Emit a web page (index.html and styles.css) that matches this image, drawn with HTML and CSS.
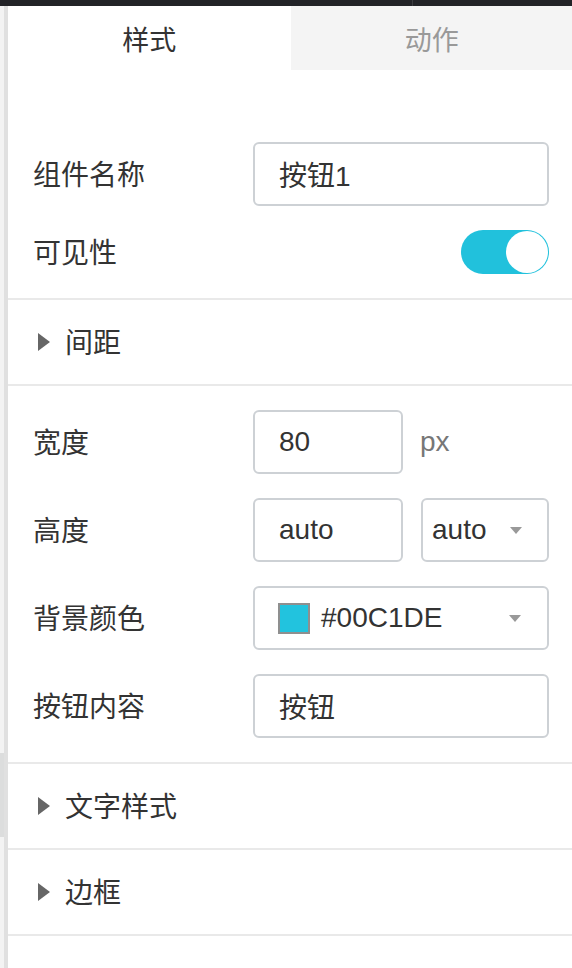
FILE: index.html
```html
<!DOCTYPE html>
<html lang="zh-CN">
<head>
<meta charset="utf-8">
<title>样式面板</title>
<link rel="stylesheet" href="styles.css">
</head>
<body>
<div class="app">
  <div class="topbar"><span class="topbar-sep"></span></div>
  <div class="main">
    <div class="gutter"><span class="gutter-thumb"></span></div>
    <div class="panel">
      <div class="tabs">
        <div class="tab active">样式</div>
        <div class="tab">动作</div>
      </div>

      <section class="group first">
        <div class="row">
          <div class="label">组件名称</div>
          <div class="field input wide">按钮1</div>
        </div>
        <div class="row short">
          <div class="label">可见性</div>
          <div class="toggle-wrap"><div class="toggle"><span class="knob"></span></div></div>
        </div>
      </section>

      <section class="collapse">
        <span class="caret"></span><span class="collapse-title">间距</span>
      </section>

      <section class="group">
        <div class="row">
          <div class="label">宽度</div>
          <div class="controls">
            <div class="field input narrow">80</div>
            <span class="unit">px</span>
          </div>
        </div>
        <div class="row">
          <div class="label">高度</div>
          <div class="controls">
            <div class="field input narrow">auto</div>
            <div class="field select small">auto<span class="arrow"></span></div>
          </div>
        </div>
        <div class="row">
          <div class="label">背景颜色</div>
          <div class="field select color wide"><span class="swatch"></span><span class="color-text">#00C1DE</span><span class="arrow"></span></div>
        </div>
        <div class="row">
          <div class="label">按钮内容</div>
          <div class="field input wide">按钮</div>
        </div>
      </section>

      <section class="collapse">
        <span class="caret"></span><span class="collapse-title">文字样式</span>
      </section>
      <section class="collapse">
        <span class="caret"></span><span class="collapse-title">边框</span>
      </section>
    </div>
  </div>
</div>
</body>
</html>
```

FILE: styles.css
```css
* { box-sizing: border-box; }

html, body {
  margin: 0;
  padding: 0;
  background: #ffffff;
}

body {
  font-family: "Liberation Sans", "Noto Sans CJK SC", sans-serif;
  font-size: 28px;
  color: #333333;
}

.app {
  width: 572px;
  height: 968px;
  overflow: hidden;
  display: flex;
  flex-direction: column;
}

.topbar {
  height: 6px;
  background: #222327;
  position: relative;
  flex: none;
}

.topbar-sep {
  position: absolute;
  left: 412px;
  top: 0;
  width: 1px;
  height: 6px;
  background: #3b3c40;
}

.main {
  flex: 1;
  display: flex;
}

.gutter {
  width: 8px;
  flex: none;
  background: #f3f3f3;
  border-right: 4px solid #e0e0e0;
  position: relative;
}

.gutter-thumb {
  position: absolute;
  left: 0;
  top: 747px;
  width: 4px;
  height: 84px;
  background: #dcdddd;
}

.panel {
  flex: 1;
  display: flex;
  flex-direction: column;
}

.tabs {
  display: flex;
  height: 64px;
}

.tab {
  flex: 1;
  display: flex;
  align-items: center;
  justify-content: center;
  background: #f4f4f4;
  color: #999999;
  font-family: "Noto Sans CJK SC", sans-serif;
  font-size: 27px;
}

.tab.active {
  background: #ffffff;
  color: #333333;
}

.group {
  display: flex;
  flex-direction: column;
  gap: 24px;
  padding: 24px 24px 24px 25px;
  border-bottom: 2px solid #e9e9e9;
}

.group.first {
  padding-top: 72px;
}

.row {
  display: flex;
  align-items: center;
  height: 64px;
}

.row.short {
  height: 44px;
}

.label {
  width: 220px;
  flex: none;
  font-family: "Noto Sans CJK SC", sans-serif;
  color: #333333;
  margin-top: -2px;
}

.controls {
  display: flex;
  align-items: center;
  gap: 18px;
  flex: 1;
}

.field {
  height: 64px;
  border: 2px solid #cdd1d5;
  border-radius: 6px;
  display: flex;
  align-items: center;
  color: #333333;
  background: #ffffff;
}

.input {
  padding-left: 24px;
}

.wide {
  flex: 1;
}

.narrow {
  width: 150px;
}

.unit {
  color: #777777;
  margin-left: -1px;
}

.select {
  position: relative;
  justify-content: space-between;
}

.select.small {
  width: 128px;
  padding: 0 25px 0 9px;
}

.select.color {
  padding: 0 26px 0 23px;
  justify-content: flex-start;
}

.arrow {
  width: 0;
  height: 0;
  border-left: 6px solid transparent;
  border-right: 6px solid transparent;
  border-top: 7px solid #999999;
}

.select.color .arrow {
  margin-left: auto;
}

.swatch {
  width: 32px;
  height: 31px;
  background: #22c3de;
  border: 2px solid #8f8f8f;
  flex: none;
}

.color-text {
  margin-left: 11px;
}

.toggle-wrap {
  flex: 1;
  display: flex;
  justify-content: flex-end;
}

.toggle {
  width: 88px;
  height: 44px;
  border-radius: 22px;
  background: #21c1dc;
  display: flex;
  align-items: center;
  justify-content: flex-end;
  padding: 1px;
}

.knob {
  width: 42px;
  height: 42px;
  border-radius: 50%;
  background: #ffffff;
}

.collapse {
  height: 86px;
  display: flex;
  align-items: center;
  padding-left: 30px;
  border-bottom: 2px solid #e9e9e9;
}

.caret {
  width: 0;
  height: 0;
  border-top: 9px solid transparent;
  border-bottom: 9px solid transparent;
  border-left: 12px solid #666666;
  margin-right: 15px;
}

.collapse-title {
  font-family: "Noto Sans CJK SC", sans-serif;
  color: #333333;
  margin-top: -2px;
}
```
